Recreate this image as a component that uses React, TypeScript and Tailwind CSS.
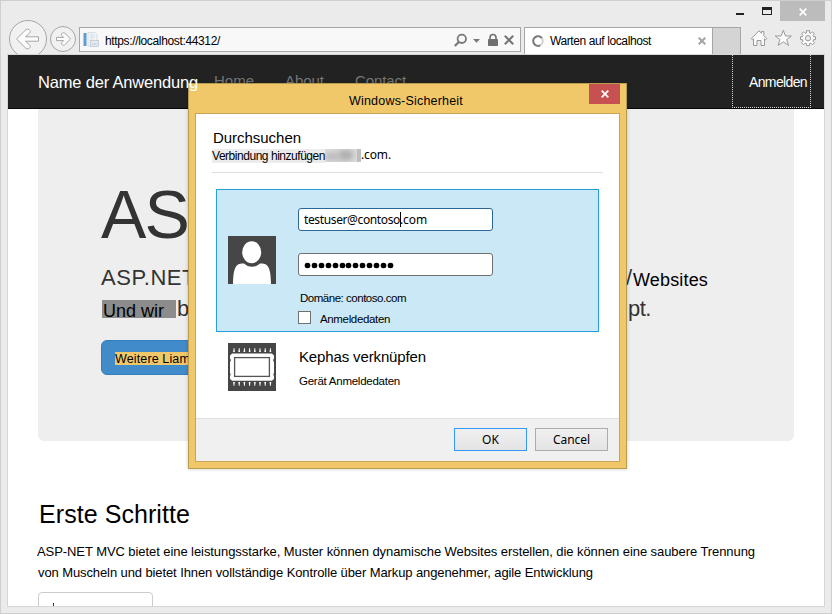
import { useLayoutEffect, useRef } from 'react';

/** Single line of text whose tracking is adjusted so that it fills `w` pixels. */
function Fit({ w, className = '', children }: { w: number; className?: string; children: string }) {
  const ref = useRef<HTMLSpanElement>(null);
  useLayoutEffect(() => {
    const el = ref.current;
    if (!el) return;
    el.style.letterSpacing = '0px';
    const natural = el.getBoundingClientRect().width;
    el.style.letterSpacing = `${(w - natural) / children.length}px`;
  }, [w, children]);
  return (
    <span ref={ref} className={`inline-block w-fit shrink-0 whitespace-pre ${className}`}>
      {children}
    </span>
  );
}

function NavArrows() {
  return (
    <svg width="70" height="38" viewBox="8 17 70 38" fill="none" className="shrink-0">
      <circle cx="28" cy="39" r="18.5" fill="#f1f1f1" stroke="#a6a6a6" />
      <path
        d="M16.5 39L26 29.6Q27.5 28.6 29 29.6L30 30.6Q30.8 31.8 29.8 32.8L25.5 36.8H38.5V41.2H25.5L29.8 45.3Q30.8 46.4 30 47.5L29 48.5Q27.5 49.4 26 48.4Z"
        fill="#fcfcfc"
        stroke="#a6a6a6"
        strokeLinejoin="round"
      />
      <circle cx="63" cy="39" r="12.5" fill="#f1f1f1" stroke="#a6a6a6" />
      <path
        d="M70.5 39L64.6 33Q63.6 32.2 62.4 33L61.6 33.8Q61 34.8 61.8 35.6L63.6 37.4H56.5V40.6H63.6L61.8 42.4Q61 43.4 61.8 44.3L62.5 45Q63.6 45.7 64.6 44.9Z"
        fill="#fcfcfc"
        stroke="#a6a6a6"
        strokeLinejoin="round"
      />
    </svg>
  );
}

function PageIcon() {
  return (
    <svg width="16" height="16" viewBox="0 0 16 16" className="shrink-0">
      <rect x="0.5" y="1" width="3" height="13" fill="#5b9fd0" />
      <path d="M5 0.5H12L14 3V14H5Z" fill="#f2f5f8" stroke="#cfd7df" strokeWidth=".8" />
      <path d="M7 3H11M7 5H12M7 7H10" stroke="#d4dce4" />
      <rect x="7.5" y="8.5" width="8" height="6" fill="#e6ebf1" stroke="#bcc8d5" strokeWidth=".8" />
      <path d="M9 12H14" stroke="#bcc8d5" />
    </svg>
  );
}

function AddressIcons() {
  return (
    <svg width="62" height="16" viewBox="454 31 62 16" fill="none" className="shrink-0">
      <circle cx="461.8" cy="37.8" r="4.2" stroke="#777" strokeWidth="1.8" />
      <path d="M459 40.8L454.8 45" stroke="#777" strokeWidth="2.2" />
      <path d="M473 38H480L476.5 41.7Z" fill="#777" />
      <rect x="488" y="38" width="10" height="7" rx=".8" fill="#707070" />
      <path d="M490 38V36.5a3 3 0 0 1 6 0V38" stroke="#707070" strokeWidth="1.6" />
      <path d="M504.8 34.8L513.2 43.2M513.2 34.8L504.8 43.2" stroke="#777" strokeWidth="2.1" />
    </svg>
  );
}

function ToolIcons() {
  return (
    <svg width="68" height="18" viewBox="750 29 68 18" fill="#fbfbfb" stroke="#999" className="shrink-0">
      <path
        d="M751.3 38.6L759 30.8L761.5 33.2V31.5H763.8V35.6L766.8 38.6L765.6 39.8L764.5 38.8V45.5H761V40.5H757V45.5H753.5V38.8L752.4 39.8Z"
        strokeLinejoin="round"
      />
      <path
        d="M783.3 30.3L785.5 36H791.4L786.7 39.6L788.5 45.4L783.3 41.9L778.1 45.4L779.9 39.6L775.2 36H781.1Z"
        strokeLinejoin="round"
      />
      <g transform="translate(808 38.2)">
        <path
          d="M-1.5 -7.5H1.5V-5.4L3 -4.9L4.5 -6.4L6.5 -4.4L5 -2.9L5.5 -1.5H7.5V1.5H5.5L5 3L6.5 4.5L4.5 6.5L3 5L1.5 5.5V7.5H-1.5V5.5L-3 5L-4.5 6.5L-6.5 4.5L-5 3L-5.5 1.5H-7.5V-1.5H-5.5L-5 -2.9L-6.5 -4.4L-4.5 -6.4L-3 -4.9L-1.5 -5.4Z"
          strokeLinejoin="round"
        />
        <circle r="2.6" fill="#ececec" />
      </g>
    </svg>
  );
}

function Cross({ color, size, weight }: { color: string; size: number; weight: number }) {
  return (
    <svg width={size} height={size} viewBox="0 0 8 8" className="shrink-0">
      <path d="M.7 .7L7.3 7.3M7.3 .7L.7 7.3" stroke={color} strokeWidth={weight} />
    </svg>
  );
}

function Chrome() {
  return (
    <header className="flex h-[53px] shrink-0 flex-col">
      <div className="flex h-5 justify-end pr-[6px]">
        <div className="mr-[18px] mt-3 h-[2px] w-2 bg-[#222]" />
        <div className="mr-2 mt-[6px] h-[8px] w-[10px] border border-t-[3px] border-[#222]" />
        <div className="flex w-[45px] items-center justify-center bg-[#bcbcbc] pt-px">
          <Cross color="#fff" size={8} weight={1.7} />
        </div>
      </div>
      <div className="flex h-[33px] items-start pl-[7px]">
        <div className="-mt-1 shrink-0">
          <NavArrows />
        </div>
        <div className="ml-px mt-[6px] flex h-[25px] w-[442px] shrink-0 items-center border border-[#a6a6a6] bg-[#f8f8f8] pl-[3px]">
          <PageIcon />
          <Fit w={115} className="ml-[6px] pt-[3px] text-[12px] leading-4">https://localhost:44312/</Fit>
          <div className="ml-auto mr-[4px]">
            <AddressIcons />
          </div>
        </div>
        <div className="ml-[3px] mt-[6px] flex h-[27px] w-[189px] shrink-0 items-center border border-b-0 border-[#a6a6a6] bg-white pl-[7px] pr-[6px]">
          <svg width="12" height="12" viewBox="0 0 12 12" fill="none">
            <circle cx="6" cy="6" r="4.8" stroke="#d2d2d2" strokeWidth="2" />
            <path d="M9.8 3A4.8 4.8 0 1 0 8.2 10.3" stroke="#7b7b7b" strokeWidth="2" />
          </svg>
          <Fit w={101} className="ml-[6px] text-[12px] leading-4">Warten auf localhost</Fit>
          <div className="ml-auto">
            <Cross color="#a3a3a3" size={8} weight={2} />
          </div>
        </div>
        <div className="-ml-px mt-[6px] h-[27px] w-[29px] shrink-0 border border-b-0 border-[#a6a6a6] bg-[#d4d4d4]" />
        <div className="ml-[9px] mt-2 shrink-0">
          <ToolIcons />
        </div>
      </div>
    </header>
  );
}

function PageNav() {
  return (
    <nav className="flex h-[54px] shrink-0 border-b border-[#080808] bg-[#222] pl-[30px] text-[15px] text-[#777]">
      <Fit w={160} className="relative z-20 mt-[15px] text-[16.5px] leading-6 text-white">Name der Anwendung</Fit>
      <Fit w={40} className="ml-4 mt-[14px] leading-6">Home</Fit>
      <Fit w={39} className="ml-[31px] mt-[14px] leading-6">About</Fit>
      <Fit w={51} className="ml-[31px] mt-[14px] leading-6">Contact</Fit>
      <div className="ml-auto mr-[13px] w-[79px] border border-t-0 border-dotted border-[#d5d5d5] pl-4 pt-[15px] text-[14px] leading-6 text-white">
        <Fit w={58}>Anmelden</Fit>
      </div>
    </nav>
  );
}

function Jumbotron() {
  return (
    <section className="ml-[30px] flex h-[332px] w-[756px] shrink-0 flex-col rounded-b-md bg-[#eee] pl-[63px] text-[#333]">
      <Fit w={87} className="mt-[71px] text-[68px] leading-[68px]">AS</Fit>
      <div className="mt-[14px] flex h-[30px] items-center text-[22px]">
        <Fit w={95}>ASP.NET</Fit>
        <Fit w={6} className="ml-[430px]">/</Fit>
        <Fit w={75} className="ml-px pt-[5px] text-[18px] leading-6 text-black">Websites</Fit>
      </div>
      <div className="mt-px flex h-[30px] items-center text-[22px]">
        <div className="ml-px mt-[2px] flex h-[18px] w-[74px] items-center bg-[#8c8c8c] pl-px pt-[4px] text-[18px] leading-[18px] text-black">
          <Fit w={61}>Und wir</Fit>
        </div>
        <Fit w={12} className="ml-px">b</Fit>
        <Fit w={23} className="ml-[439px]">pt.</Fit>
      </div>
      <div className="mt-[17px] flex h-[35px] w-[130px] items-center rounded-md border border-[#357ebd] bg-[#428bca] pl-[13px]">
        <div className="mt-px h-[13px] bg-[#f0c869] text-[12.5px] leading-[14px] text-black">
          <Fit w={75}>Weitere Liam</Fit>
        </div>
      </div>
    </section>
  );
}

function UserTile() {
  return (
    <svg width="48" height="48" viewBox="0 0 48 48" className="shrink-0">
      <rect width="48" height="48" fill="#464646" />
      <path d="M5 48C5.3 38 6 31 10 28.5C12.5 27.3 15 27.6 16.5 27.8C20 31.8 28 31.8 31.5 27.8C33 27.6 35.5 27.3 38 28.5C42 31 42.7 38 43 48Z" fill="#fff" />
      <ellipse cx="23.7" cy="16.3" rx="9.5" ry="11" fill="#fff" />
    </svg>
  );
}

function ChipTile() {
  const pins = [6, 11.2, 16.4, 21.6, 26.8, 32, 37.2, 42.4];
  return (
    <svg width="48" height="48" viewBox="0 0 48 48" className="shrink-0">
      <rect width="48" height="48" fill="#464646" />
      {pins.map((x) => (
        <path key={x} d={`M${x - 0.3} 5H${x + 0.3}L${x + 0.9} 9H${x - 0.9}ZM${x - 0.9} 39H${x + 0.9}L${x + 0.3} 43H${x - 0.3}Z`} fill="#fff" />
      ))}
      <path d="M4 10.5H44L46 12.5V15.5A1.5 2 0 0 0 46 19V30A1.5 2 0 0 0 46 33V35.8L44 37.8H4L2 35.8V33A1.5 2 0 0 0 2 30V19A1.5 2 0 0 0 2 15.5V12.5Z" fill="#fff" />
      <rect x="6.6" y="14.6" width="34.8" height="18.8" fill="#fff" stroke="#555" strokeWidth="1.3" />
    </svg>
  );
}

function Credentials() {
  return (
    <div className="ml-5 mt-4 flex h-[143px] w-[383px] shrink-0 items-start border border-[#26a0da] bg-[#cbe8f6] pl-[11px]">
      <div className="mt-[46px]">
        <UserTile />
      </div>
      <div className="ml-[22px] mt-[18px] flex flex-col">
        <div className="flex h-[23px] w-[195px] items-center rounded-[3px] border border-[#2a6796] bg-white pl-[5px] font-['Noto_Sans'] text-[12px] leading-5">
          <Fit w={96}>testuser@contoso</Fit>
          <div className="-mr-px h-[15px] w-px bg-black" />
          <Fit w={27}>.com</Fit>
        </div>
        <div className="mt-[22px] flex h-[23px] w-[195px] items-center gap-[1.92px] rounded-[3px] border border-[#707070] bg-white pl-[6px] pt-[2px]">
          {Array.from({ length: 13 }, (_, i) => (
            <div key={i} className="size-[5px] shrink-0 rounded-full bg-black ring-[0.3px] ring-black" />
          ))}
        </div>
        <Fit w={106} className="ml-[2px] mt-[14px] text-[11.5px] leading-4">Domäne: contoso.com</Fit>
        <div className="mt-[5px] flex h-[13px] items-center">
          <div className="size-[13px] border border-[#707070] bg-white" />
          <Fit w={70} className="ml-[9px] pt-[3px] text-[11.5px] leading-4">Anmeldedaten</Fit>
        </div>
      </div>
    </div>
  );
}

function DialogButton({ label, w, edge }: { label: string; w: number; edge: string }) {
  return (
    <div className={`h-[23px] w-[73px] p-px ${edge}`}>
      <button className="flex h-[21px] w-[71px] items-center justify-center bg-linear-to-b from-[#f0f0f0] to-[#e4e4e4] font-['Noto_Sans'] text-[12px] leading-5">
        <Fit w={w}>{label}</Fit>
      </button>
    </div>
  );
}

function SecurityDialog() {
  return (
    <div className="absolute left-[187px] top-[82px] z-10 flex h-[386px] w-[439px] flex-col border border-[#b89a50] bg-[#f0c869] px-[6px] pb-[6px] shadow-[0_0_4px_rgba(0,0,0,0.2)]">
      <div className="flex h-[29px] shrink-0">
        <Fit w={114} className="ml-[154px] mt-[9px] text-[12.5px] leading-4">Windows-Sicherheit</Fit>
        <div className="ml-auto flex h-5 w-[31px] items-center justify-center bg-[#c75050]">
          <Cross color="#fff" size={8} weight={1.7} />
        </div>
      </div>
      <div className="flex grow flex-col border border-[#c9a55a] bg-white">
        <Fit w={88} className="ml-[17px] mt-[15px] text-[15px] leading-[18px]">Durchsuchen</Fit>
        <div className="ml-4 mt-px flex h-[15px] items-center">
          <div className="h-[14px] bg-[#ececec] text-[12px] leading-[15px]">
            <Fit w={113}>Verbindung hinzufügen</Fit>
          </div>
          <div className="flex h-[13px] w-9 overflow-hidden bg-[#dedede]">
            <div className="mt-1 h-[7px] w-[14px] bg-[#b4b4b4] blur-[3px]" />
            <div className="mt-px h-[10px] w-[14px] bg-[#aaa] blur-[3px]" />
            <div className="ml-1 h-[13px] w-1 bg-[#bebebe]" />
          </div>
          <Fit w={30} className="-mt-[2px] font-['Noto_Sans'] text-[12px] leading-4">.com.</Fit>
        </div>
        <div className="ml-4 mt-[9px] h-px w-[391px] shrink-0 bg-[#dedede]" />
        <Credentials />
        <div className="ml-8 mt-[11px] flex">
          <ChipTile />
          <div className="ml-[23px] flex flex-col">
            <Fit w={127} className="mt-[4px] text-[15px] leading-5">Kephas verknüpfen</Fit>
            <Fit w={101} className="mt-[6px] text-[11.5px] leading-4">Gerät Anmeldedaten</Fit>
          </div>
        </div>
        <div className="mt-auto flex h-[43px] shrink-0 justify-end gap-2 border-t border-[#dfdfdf] bg-[#f0f0f0] pr-[11px] pt-[9px]">
          <DialogButton label="OK" w={17} edge="bg-[#3399ff]" />
          <DialogButton label="Cancel" w={37} edge="bg-[#acacac]" />
        </div>
      </div>
    </div>
  );
}

export default function App() {
  return (
    <div className="relative flex h-[614px] w-[832px] flex-col overflow-hidden border border-[#cfcfcf] bg-[#ebebeb] font-['Liberation_Sans',sans-serif] text-black">
      <Chrome />
      <main className="ml-[6px] flex h-[553px] w-[818px] flex-col overflow-hidden border border-[#d6d6d6] bg-white">
        <PageNav />
        <Jumbotron />
        <Fit w={151} className="ml-[31px] mt-[58px] text-[25px] leading-[30px]">Erste Schritte</Fit>
        <div className="ml-[29px] mt-3 flex flex-col items-start text-[13px] leading-[21px]">
          <Fit w={718}>ASP-NET MVC bietet eine leistungsstarke, Muster können dynamische Websites erstellen, die können eine saubere Trennung</Fit>
          <Fit w={555} className="ml-px">von Muscheln und bietet Ihnen vollständige Kontrolle über Markup angenehmer, agile Entwicklung</Fit>
        </div>
        <div className="ml-[30px] mt-[9px] h-[34px] w-[115px] shrink-0 rounded border border-[#ccc] pl-[14px] pt-[10px]">
          <div className="h-[10px] w-px bg-[#333]" />
        </div>
      </main>
      <SecurityDialog />
    </div>
  );
}
